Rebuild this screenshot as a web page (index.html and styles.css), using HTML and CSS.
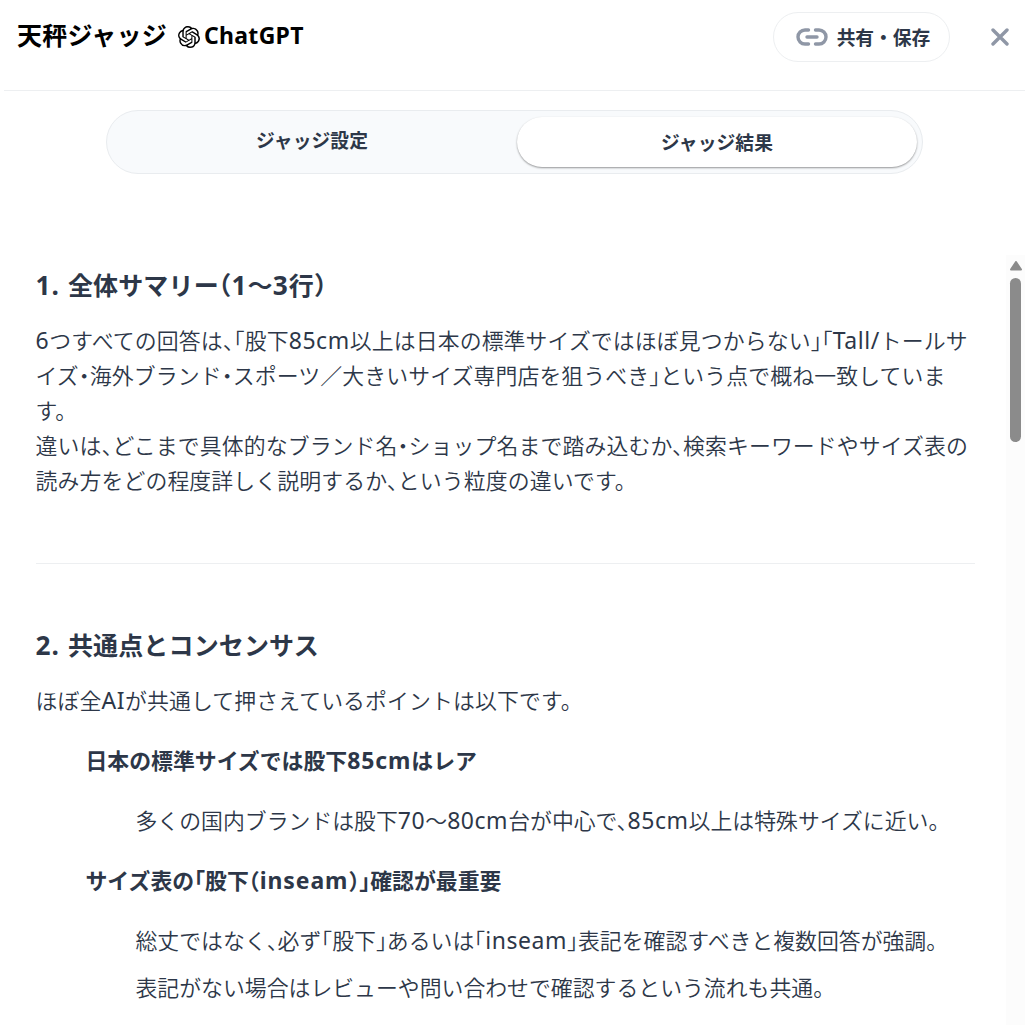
FILE: index.html
```html
<!DOCTYPE html>
<html lang="ja">
<head>
  <meta charset="UTF-8">
  <title>天秤ジャッジ</title>
  <link rel="stylesheet" href="styles.css">
</head>
<body>

  <div class="modal">
    <header class="modal-header">
      <h1 class="title">天秤ジャッジ</h1>
      <svg class="model-icon" viewBox="0 0 24 24" fill="currentColor">
        <path d="M22.2819 9.8211a5.9847 5.9847 0 0 0-.5157-4.9108 6.0462 6.0462 0 0 0-6.5098-2.9A6.0651 6.0651 0 0 0 4.9807 4.1818a5.9847 5.9847 0 0 0-3.9977 2.9 6.0462 6.0462 0 0 0 .7427 7.0966 5.98 5.98 0 0 0 .511 4.9107 6.051 6.051 0 0 0 6.5146 2.9001A5.9847 5.9847 0 0 0 13.2599 24a6.0557 6.0557 0 0 0 5.7718-4.2058 5.9894 5.9894 0 0 0 3.9977-2.9001 6.0557 6.0557 0 0 0-.7475-7.0729zm-9.022 12.6081a4.4755 4.4755 0 0 1-2.8764-1.0408l.1419-.0804 4.7783-2.7582a.7948.7948 0 0 0 .3927-.6813v-6.7369l2.02 1.1686a.071.071 0 0 1 .038.052v5.5826a4.504 4.504 0 0 1-4.4945 4.4944zm-9.6607-4.1254a4.4708 4.4708 0 0 1-.5346-3.0137l.142.0852 4.783 2.7582a.7712.7712 0 0 0 .7806 0l5.8428-3.3685v2.3324a.0804.0804 0 0 1-.0332.0615L9.74 19.9502a4.4992 4.4992 0 0 1-6.1408-1.6464zM2.3408 7.8956a4.485 4.485 0 0 1 2.3655-1.9728V11.6a.7664.7664 0 0 0 .3879.6765l5.8144 3.3543-2.0201 1.1685a.0757.0757 0 0 1-.071 0l-4.8303-2.7865A4.504 4.504 0 0 1 2.3408 7.872zm16.5963 3.8558L13.1038 8.364 15.1192 7.2a.0757.0757 0 0 1 .071 0l4.8303 2.7913a4.4944 4.4944 0 0 1-.6765 8.1042v-5.6772a.79.79 0 0 0-.407-.667zm2.0107-3.0231l-.142-.0852-4.7735-2.7818a.7759.7759 0 0 0-.7854 0L9.409 9.2297V6.8974a.0662.0662 0 0 1 .0284-.0615l4.8303-2.7866a4.4992 4.4992 0 0 1 6.6802 4.66zM8.3065 12.863l-2.02-1.1638a.0804.0804 0 0 1-.038-.0567V6.0742a4.4992 4.4992 0 0 1 7.3757-3.4537l-.142.0805L8.704 5.459a.7948.7948 0 0 0-.3927.6813zm1.0976-2.3654l2.602-1.4998 2.6069 1.4998v2.9994l-2.5974 1.4997-2.6067-1.4997Z"/>
      </svg>
      <span class="model-name">ChatGPT</span>
      <button class="share-btn">
        <svg class="link-icon" viewBox="0 0 32 18">
          <path d="M12.500 2H9a7 7 0 0 0 0 14h3.500M19.500 2H23a7 7 0 0 1 0 14h-3.500M11 9h10"/>
        </svg>
        <span>共有・保存</span>
      </button>
      <button class="close-btn">
        <svg viewBox="0 0 18 18"><path d="M2 2l14 14M16 2L2 16"/></svg>
      </button>
    </header>

    <nav class="tabs">
      <button class="tab">ジャッジ設定</button>
      <button class="tab active">ジャッジ結果</button>
    </nav>

    <div class="result">
      <main class="content">
        <h3><span class="en">1. </span>全体サマリー（<span class="en">1</span>～<span class="en">3</span>行）</h3>
        <p><span class="en">6</span>つすべての回答は、「股下<span class="en">85cm</span>以上は日本の標準サイズではほぼ見つからない」「<span class="en">Tall/</span>トールサ<br>イズ・海外ブランド・スポーツ／大きいサイズ専門店を狙うべき」という点で概ね一致していま<br>す。<br>違いは、どこまで具体的なブランド名・ショップ名まで踏み込むか、検索キーワードやサイズ表の<br>読み方をどの程度詳しく説明するか、という粒度の違いです。</p>

        <hr>

        <h3><span class="en">2. </span>共通点とコンセンサス</h3>
        <p>ほぼ全<span class="en">AI</span>が共通して押さえているポイントは以下です。</p>
        <ul class="points">
          <li>
            <strong>日本の標準サイズでは股下<span class="en">85cm</span>はレア</strong>
            <ul>
              <li>多くの国内ブランドは股下<span class="en">70</span>～<span class="en">80cm</span>台が中心で、<span class="en">85cm</span>以上は特殊サイズに近い。</li>
            </ul>
          </li>
          <li>
            <strong>サイズ表の「股下（<span class="en">inseam</span>）」確認が最重要</strong>
            <ul>
              <li>総丈ではなく、必ず「股下」あるいは「<span class="en">inseam</span>」表記を確認すべきと複数回答が強調。</li>
              <li>表記がない場合はレビューや問い合わせで確認するという流れも共通。</li>
            </ul>
          </li>
        </ul>
      </main>
      <div class="scrollbar">
        <svg class="arrow" viewBox="0 0 12 10"><path d="M6 1L11 8.500H1z"/></svg>
        <div class="thumb"></div>
      </div>
    </div>
  </div>

</body>
</html>
```
FILE: styles.css
```css
* {
  box-sizing: border-box;
}

body {
  margin: 0;
  background: #fff;
  color: #2d3748;
  font-family: "Noto Sans", "Noto Sans CJK JP", sans-serif;
  overflow: hidden;
}

button {
  border: 0;
  padding: 0;
  background: none;
  color: inherit;
  font-family: "Noto Sans CJK JP", sans-serif;
  font-size: 18.75px;
  font-weight: bold;
}

.modal {
  display: flex;
  flex-direction: column;
  width: 1025px;
  height: 1025px;
}

.modal-header {
  display: flex;
  align-items: flex-start;
  height: 91px;
  margin-left: 4px;
  padding: 12px 16px 0 13px;
  border-bottom: 1px solid #edeff1;
  color: #000;
}

.title {
  margin: 0;
  font-size: 25px;
  line-height: 46px;
  letter-spacing: 0.2px;
}

.model-icon {
  width: 22px;
  height: 22px;
  margin: 14px 4px 0 11px;
}

.model-name {
  font-size: 23px;
  font-weight: bold;
  line-height: 47px;
  letter-spacing: 0.3px;
}

.share-btn {
  display: flex;
  align-items: center;
  justify-content: center;
  gap: 9px;
  width: 177px;
  height: 50px;
  margin-left: auto;
  padding-left: 3px;
  border: 1px solid #edeff1;
  border-radius: 25px;
  color: #2d3748;
}

.share-btn span {
  padding-bottom: 2px;
}

.link-icon {
  width: 32px;
  height: 18px;
}

.link-icon path,
.close-btn path {
  fill: none;
  stroke: #8f97a6;
  stroke-width: 3.4;
  stroke-linecap: round;
}

.close-btn {
  width: 18px;
  height: 18px;
  margin: 16px 0 0 41px;
}

.close-btn svg {
  display: block;
}

.tabs {
  display: flex;
  width: 817px;
  height: 64px;
  margin: 19px 0 0 106px;
  padding: 5px 5px 5px 4px;
  border: 1px solid #e9ecef;
  border-radius: 32px;
  background: #f8fafc;
}

.tab {
  width: 400px;
  padding: 0 0 5px 2px;
  letter-spacing: 0.1px;
}

.tab.active {
  height: 50px;
  margin: 1px 0 0 6px;
  padding: 0 0 1px;
  border-radius: 26px;
  background: #fff;
  box-shadow: 0 1px 2px rgba(0, 0, 0, 0.4);
}

.result {
  display: flex;
  flex: 1;
  min-height: 0;
  margin-top: 81px;
}

.content {
  flex: 1;
  padding: 10px 31px 0 35.5px;
  overflow: hidden;
  font-size: 21.875px;
  line-height: 35px;
  white-space: nowrap;
  /* half-width Japanese punctuation */
  font-feature-settings: "halt";
}

.en {
  font-size: 1.05em;
  font-weight: 400;
  line-height: 1;
  letter-spacing: 0.025em;
}

h3 .en,
strong .en {
  font-weight: bold;
  letter-spacing: 0.04em;
}

h3 {
  margin: 0 0 18px;
  font-size: 25px;
  line-height: 40px;
  letter-spacing: 0.15px;
}

p {
  margin: 0;
  font-weight: 350;
  letter-spacing: 0.12px;
}

hr {
  margin: 65px 0 61px 0.5px;
  border: 0;
  border-top: 1px solid #edeff1;
}

.content ul {
  margin: 0;
  padding: 25px 0 0 50px;
  list-style: none;
}

.points > li + li {
  margin-top: 25px;
}

.points ul li {
  font-weight: 350;
}

.points ul li + li {
  margin-top: 12px;
}

.scrollbar {
  display: flex;
  flex-direction: column;
  align-items: center;
  width: 19px;
  padding-top: 5px;
  background: #fcfcfc;
}

.arrow {
  width: 12px;
  height: 10px;
  margin-top: 1px;
}

.arrow path {
  fill: #8b8b8b;
  stroke: #8b8b8b;
  stroke-width: 2;
  stroke-linejoin: round;
}

.thumb {
  width: 11px;
  height: 164px;
  margin-top: 7px;
  border-radius: 6px;
  background: #8b8b8b;
}
```
